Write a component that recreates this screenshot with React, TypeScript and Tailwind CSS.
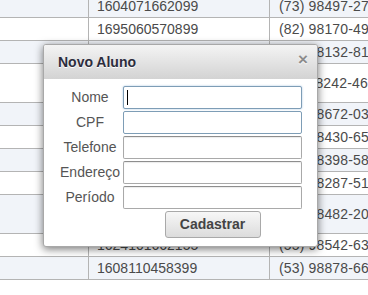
import * as React from "react"

const rows: { id: string; fone: string; tall?: boolean }[] = [
  { id: "1604071662099", fone: "(73) 98497-2765" },
  { id: "1695060570899", fone: "(82) 98170-4923" },
  { id: "1681120337499", fone: "(91) 98132-8170" },
  { id: "1623092145799", fone: "(11) 98242-4611", tall: true },
  { id: "1677031290199", fone: "(21) 98672-0388" },
  { id: "1610052281599", fone: "(31) 98430-6542" },
  { id: "1658040874699", fone: "(48) 98398-5810" },
  { id: "1632110663299", fone: "(62) 98287-5109" },
  { id: "1646090148899", fone: "(85) 98482-2037", tall: true },
  { id: "1624101662155", fone: "(55) 98542-6314" },
  { id: "1608110458399", fone: "(53) 98878-6621" },
]

const fields = ["Nome", "CPF", "Telefone", "Endereço", "Período"]

export default function App() {
  return (
    <div className="relative w-[368px] h-[295px] overflow-hidden bg-white font-['Liberation_Sans',Arial,sans-serif] text-[14px] text-[#4a4a4a]">
      <div className="-mt-[5px]">
        {rows.map((r, i) => (
          <div
            key={i}
            className={
              "grid grid-cols-[89px_181px_1fr] border-b border-[#b4b4b4] " +
              (r.tall ? "h-[39px] " : "h-[23px] ") +
              (i % 2 === 0 ? "bg-[#f1f4f9]" : "bg-white")
            }
          >
            <div className="border-r border-[#b4b4b4]" />
            <div className="border-r border-[#b4b4b4] pl-2 flex items-center whitespace-nowrap">{r.id}</div>
            <div className="pl-[9px] flex items-center whitespace-nowrap tracking-[0.15px]">{r.fone}</div>
          </div>
        ))}
      </div>

      <div className="absolute left-[43px] top-[44px] w-[275px] h-[203px] rounded-[3px] border border-[#a8a8a8] bg-white shadow-[0_2px_8px_rgba(0,0,0,0.55)] overflow-hidden">
        <div className="h-[34px] flex items-center justify-between pl-[14px] pr-[9px] bg-gradient-to-b from-[#f4f4f4] to-[#d3d3d3]">
          <span className="font-bold text-[14px] text-[#2c2c3c] [text-shadow:0_1px_0_#fff]">Novo Aluno</span>
          <span className="font-bold text-[17px] leading-none text-[#8c8c8c] -mt-[5px] [text-shadow:0_1px_0_#fff]">×</span>
        </div>
        <div className="pt-[7px] pl-[16px] pr-[15px] flex flex-col gap-[2px]">
          {fields.map((f, i) => (
            <div key={f} className="flex items-center gap-[3px]">
              <div className="w-[60px] text-center text-[14px] text-[#555] whitespace-nowrap">{f}</div>
              <div
                className={
                  "relative w-[179px] h-[23px] border bg-white rounded-[2px] " +
                  (i === 0
                    ? "border-[#7e9db6] shadow-[0_0_2px_rgba(90,150,200,0.6)]"
                    : i === 1
                    ? "border-[#7e9db6]"
                    : "border-[#a9a9a9] border-t-[#8e8e8e] shadow-[inset_0_1px_1px_rgba(0,0,0,0.08)]")
                }
              >
                {i === 0 && <span className="absolute left-[3px] top-[3px] w-px h-[15px] bg-black" />}
              </div>
            </div>
          ))}
          <div className="flex pl-[63px]">
            <div className="w-[179px] flex justify-center">
              <button className="w-[96px] h-[27px] rounded-[3px] border border-[#a9a9a9] bg-gradient-to-b from-[#f7f7f7] to-[#dcdcdc] font-bold text-[14px] text-[#444]">
                Cadastrar
              </button>
            </div>
          </div>
        </div>
      </div>
    </div>
  )
}
